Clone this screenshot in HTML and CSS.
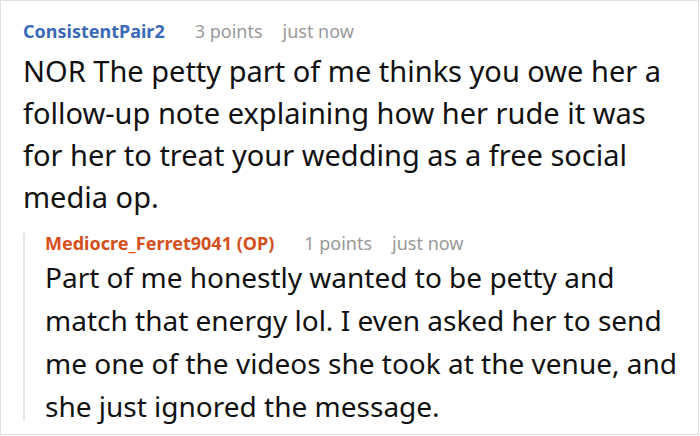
FILE: index.html
```html
<!DOCTYPE html>
<html>
<head>
<meta charset="utf-8">
<link rel="stylesheet" href="styles.css">
</head>
<body>
<div class="card">
  <div class="comment">
    <div class="meta">
      <span class="user user-blue">ConsistentPair2</span>
      <span class="points">3 points</span>
      <span class="time">just now</span>
    </div>
    <p class="text">NOR The petty part of me thinks you owe her a follow-up note explaining how her rude it was for her to treat your wedding as a free social media op.</p>
  </div>
  <div class="reply">
    <div class="meta">
      <span class="user user-orange">Mediocre_Ferret9041 (OP)</span>
      <span class="points">1 points</span>
      <span class="time">just now</span>
    </div>
    <p class="text">Part of me honestly wanted to be petty and match that energy lol. I even asked her to send me one of the videos she took at the venue, and she just ignored the message.</p>
  </div>
</div>
</body>
</html>
```
FILE: styles.css
```css
html, body {
  margin: 0;
  padding: 0;
  background: #ffffff;
}
.card {
  box-sizing: border-box;
  width: 699px;
  height: 435px;
  border: 1px solid #e0e0e0;
  padding: 17px 20px 0 22px;
  font-family: "Noto Sans", sans-serif;
  color: #111111;
  overflow: hidden;
}
.meta {
  display: flex;
  align-items: baseline;
  font-size: 18px;
  line-height: 26px;
}
.user {
  font-weight: 700;
  margin-right: 30px;
}
.user-blue { color: #3b69b8; }
.user-orange { color: #d4501c; }
.points {
  color: #999999;
  margin-right: 20px;
}
.time { color: #999999; }
.text {
  margin: 0;
  font-size: 29px;
  line-height: 42px;
}
.comment .text {
  margin-top: 6px;
}
.reply {
  position: relative;
  margin-top: 12px;
  padding-left: 22px;
}
.reply::before {
  content: "";
  position: absolute;
  left: 0;
  top: 3px;
  bottom: 8px;
  width: 2px;
  background: #e6e6e6;
}
.reply .text {
  margin-top: 0;
  font-size: 28px;
  line-height: 43px;
}
```
